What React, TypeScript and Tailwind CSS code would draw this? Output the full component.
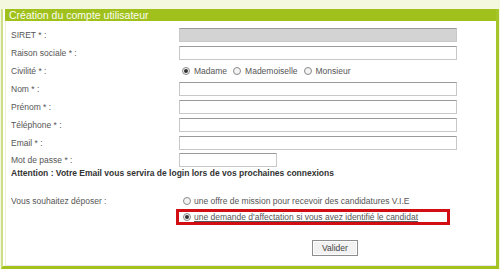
import React from "react";

const font = { fontFamily: '"Liberation Sans", Arial, sans-serif' };

function Radio({ checked = false }: { checked?: boolean }) {
  return (
    <span className="w-[8px] h-[8px] rounded-full border border-[#8a8a8a] bg-[#f4f4f4] flex items-center justify-center shrink-0">
      {checked && <span className="w-[4px] h-[4px] rounded-full bg-[#333]" />}
    </span>
  );
}

function Row({ label, children, h = "h-[18px]" }: { label: string; children: React.ReactNode; h?: string }) {
  return (
    <div className={`flex items-center ${h}`}>
      <div className="w-[173px] pl-[5px] text-[8.5px] text-[#555]">{label}</div>
      {children}
    </div>
  );
}

function Input({ w = "w-[278px]", gray = false }: { w?: string; gray?: boolean }) {
  return (
    <div
      className={`${w} h-[14px] border border-[#c8c8c8] border-t-[#9a9a9a] ${gray ? "bg-[#d3d3d3] border-[#b0b0b0] border-t-[#8a8a8a]" : "bg-white"}`}
    />
  );
}

export default function App() {
  return (
    <div className="w-[500px] h-[269px] bg-[#f4f8de] overflow-hidden" style={font}>
      <div className="h-[9px]" />
      <div className="h-[260px] ml-[1px] mr-[1px] border-l-2 border-l-[#cddf86] border-r-[3px] border-r-[#a6c52a] border-b-[3px] border-b-[#a3c21e] bg-white flex flex-col">
        <div className="ml-[2px] h-[12px] bg-[#a0c11c] text-[#fbfdf0] text-[10.5px] leading-[12px] pl-[4px]">
          Création du compte utilisateur
        </div>
        <div className="flex-1 ml-[2px] border-l border-[#eef3d8] border-b border-b-[#e8e8e8] pt-[5px] flex flex-col">
          <Row label="SIRET * :">
            <Input gray />
          </Row>
          <Row label="Raison sociale * :">
            <Input />
          </Row>
          <Row label="Civilité * :">
            <div className="flex items-center gap-[4px] text-[8.5px] text-[#555] pl-[3px]">
              <Radio checked />
              <span className="mr-[2px]">Madame</span>
              <Radio />
              <span className="mr-[2px]">Mademoiselle</span>
              <Radio />
              <span>Monsieur</span>
            </div>
          </Row>
          <Row label="Nom * :">
            <Input />
          </Row>
          <Row label="Prénom * :">
            <Input />
          </Row>
          <Row label="Téléphone * :">
            <Input />
          </Row>
          <Row label="Email * :">
            <Input />
          </Row>
          <Row label="Mot de passe * :" h="h-[16px]">
            <Input w="w-[98px]" />
          </Row>
          <div className="pl-[5px] text-[8.5px] leading-[10px] font-bold text-[#333]">
            Attention : Votre Email vous servira de login lors de vos prochaines connexions
          </div>
          <div className="h-[16px]" />
          <div className="flex">
            <div className="w-[173px] pl-[5px] text-[8.5px] text-[#555] leading-[14px]">Vous souhaitez déposer :</div>
            <div className="flex flex-col text-[8.5px] text-[#555]">
              <div className="flex items-center gap-[3px] h-[14px] pl-[4px]">
                <Radio />
                <span>une offre de mission pour recevoir des candidatures V.I.E</span>
              </div>
              <div className="flex items-center gap-[3px] h-[16px] w-[274px] -ml-[3px] border-[3px] border-[#d20d14] pl-[4px] mt-[1px]">
                <Radio checked />
                <span className="underline">une demande d'affectation si vous avez identifié le candidat</span>
              </div>
            </div>
          </div>
          <div className="flex pl-[306px] mt-[15px]">
            <button className="w-[46px] h-[16px] border border-[#8d8d8d] bg-[#f2f2f2] text-[8.5px] text-[#444] leading-none shadow-[inset_0_0_0_1px_#fff]">
              Valider
            </button>
          </div>
        </div>
      </div>
    </div>
  );
}
